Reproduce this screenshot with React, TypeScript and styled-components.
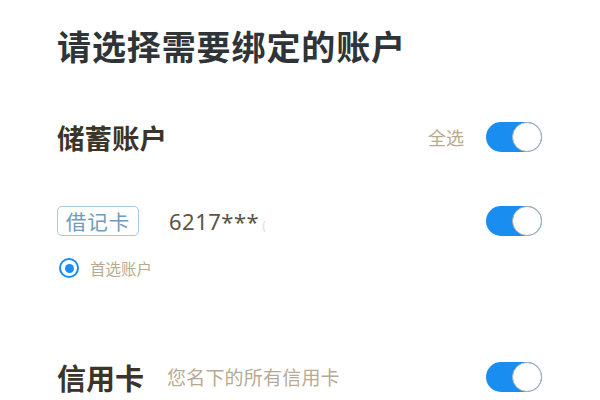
import styled, { createGlobalStyle } from 'styled-components';

const GlobalStyle = createGlobalStyle`
	html, body {
		margin: 0;
		padding: 0;
		background: #ffffff;
	}
	body {
		font-family: "Noto Sans CJK SC", "Noto Sans", sans-serif;
	}
`;

function Toggle({ on = true }: { on?: boolean }) {
	return (
		<Track $on={on}>
			<Knob />
		</Track>
	);
}

export default function App() {
	return (
		<>
			<GlobalStyle />
			<Page>
				<Title>请选择需要绑定的账户</Title>

				<SectionRow>
					<SectionTitle>储蓄账户</SectionTitle>
					<RowEnd>
						<Hint>全选</Hint>
						<Toggle />
					</RowEnd>
				</SectionRow>

				<CardRow>
					<CardInfo>
						<Tag>借记卡</Tag>
						<CardNumber>6217***</CardNumber>
						<Faded>(</Faded>
					</CardInfo>
					<Toggle />
				</CardRow>

				<RadioRow>
					<Radio>
						<RadioDot />
					</Radio>
					<RadioLabel>首选账户</RadioLabel>
				</RadioRow>

				<CreditRow>
					<CardInfo>
						<SectionTitle $size={29}>信用卡</SectionTitle>
						<Hint $wide>您名下的所有信用卡</Hint>
					</CardInfo>
					<Toggle />
				</CreditRow>
			</Page>
		</>
	);
}

const Page = styled.div`
	width: 600px;
	height: 400px;
	box-sizing: border-box;
	padding: 24px 58px 0 57px;
	display: flex;
	flex-direction: column;
	overflow: hidden;
`;

const Title = styled.h1`
	margin: 0;
	height: 44px;
	line-height: 44px;
	font-size: 34px;
	font-weight: 700;
	color: #2e3437;
	letter-spacing: 0.9px;
`;

const Row = styled.div`
	display: flex;
	flex-direction: row;
	align-items: center;
	justify-content: space-between;
	height: 30px;
`;

const SectionRow = styled(Row)`
	margin-top: 54px;
`;

const CardRow = styled(Row)`
	margin-top: 54px;
`;

const CreditRow = styled(Row)`
	margin-top: 84px;
`;

const SectionTitle = styled.span<{ $size?: number }>`
	font-size: ${p => p.$size ?? 27.5}px;
	font-weight: 700;
	color: #3a3429;
	line-height: 30px;
`;

const RowEnd = styled.div`
	display: flex;
	align-items: center;
	gap: 22px;
`;

const Hint = styled.span<{ $wide?: boolean }>`
	font-size: ${p => (p.$wide ? '19px' : '18px')};
	color: #b8aa92;
	line-height: 30px;
	margin-left: ${p => (p.$wide ? '23px' : '0')};
	letter-spacing: ${p => (p.$wide ? '0.2px' : '0')};
`;

const Track = styled.div<{ $on: boolean }>`
	width: 56px;
	height: 30px;
	box-sizing: border-box;
	border-radius: 15px;
	background: ${p => (p.$on ? '#1a8df0' : '#e5e5e5')};
	display: flex;
	align-items: center;
	justify-content: ${p => (p.$on ? 'flex-end' : 'flex-start')};
`;

const Knob = styled.div`
	width: 30px;
	height: 30px;
	box-sizing: border-box;
	border-radius: 50%;
	background: #ffffff;
	border: 1.5px solid #a9adb0;
`;

const CardInfo = styled.div`
	display: flex;
	align-items: center;
`;

const Tag = styled.span`
	box-sizing: border-box;
	height: 30px;
	width: 82px;
	border: 1.5px solid #a8c8dc;
	border-radius: 5px;
	display: flex;
	align-items: center;
	justify-content: center;
	font-size: 20.5px;
	color: #6f9cbb;
	letter-spacing: 1px;
`;

const CardNumber = styled.span`
	margin-left: 30px;
	font-family: "Noto Sans", "Open Sans", sans-serif;
	font-size: 22px;
	color: #5a5444;
	letter-spacing: 0.5px;
`;

const Faded = styled.span`
	font-family: "Noto Sans", sans-serif;
	font-size: 12px;
	color: #dcdcdc;
	margin-left: 3px;
	margin-top: 8px;
`;

const RadioRow = styled.div`
	display: flex;
	align-items: center;
	margin-top: 22px;
	margin-left: 2px;
	height: 20px;
`;

const Radio = styled.div`
	width: 20px;
	height: 20px;
	box-sizing: border-box;
	border-radius: 50%;
	border: 2px solid #1a8df0;
	display: flex;
	align-items: center;
	justify-content: center;
`;

const RadioDot = styled.div`
	width: 9px;
	height: 9px;
	border-radius: 50%;
	background: #1a8df0;
`;

const RadioLabel = styled.span`
	margin-left: 11px;
	font-size: 15.5px;
	color: #b8aa92;
`;
